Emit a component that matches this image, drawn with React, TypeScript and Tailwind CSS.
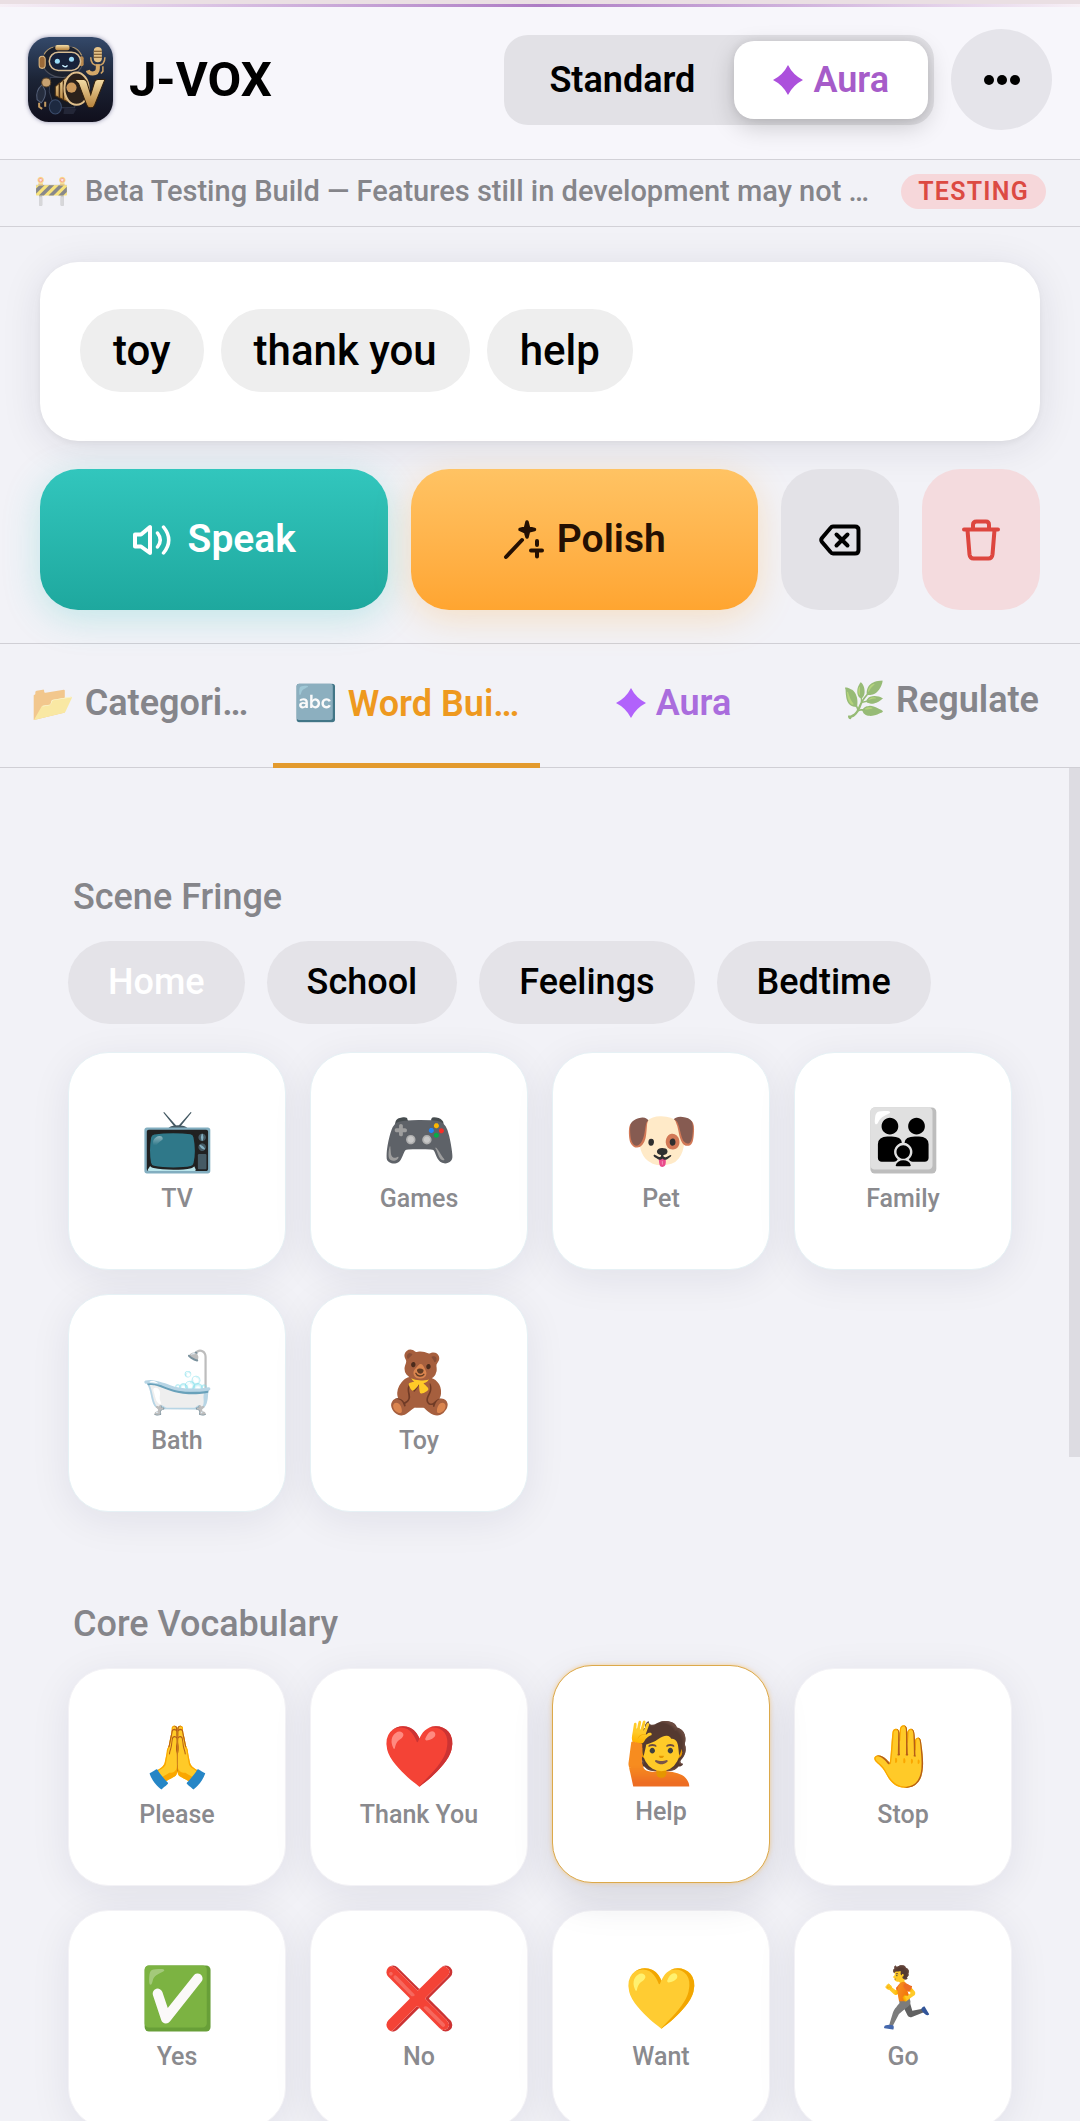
import * as React from "react";
import clsx from "clsx";

type Tile = {
  label: string;
  emoji: string;
};

const MESSAGE_WORDS = ["toy", "thank you", "help"];

const SCENES = ["Home", "School", "Feelings", "Bedtime"];

const SCENE_TILES: Tile[] = [
  { label: "TV", emoji: "📺" },
  { label: "Games", emoji: "🎮" },
  { label: "Pet", emoji: "🐶" },
  { label: "Family", emoji: "👪" },
  { label: "Bath", emoji: "🛁" },
  { label: "Toy", emoji: "🧸" }
];

const CORE_TILES: Tile[] = [
  { label: "Please", emoji: "🙏" },
  { label: "Thank You", emoji: "❤️" },
  { label: "Help", emoji: "🙋" },
  { label: "Stop", emoji: "🤚" },
  { label: "Yes", emoji: "✅" },
  { label: "No", emoji: "❌" },
  { label: "Want", emoji: "💛" },
  { label: "Go", emoji: "🏃" }
];

function Logo() {
  return (
    <svg
      viewBox="0 0 84 84"
      className="size-[85px] shrink-0 rounded-[21px] shadow-[0_0_4px_rgba(40,40,90,0.5)]"
      aria-hidden="true"
    >
      <defs>
        <linearGradient id="logoBg" x1="0" y1="0" x2="0" y2="1">
          <stop offset="0" stopColor="#34496a" />
          <stop offset="0.5" stopColor="#1c2436" />
          <stop offset="1" stopColor="#100f1c" />
        </linearGradient>
        <linearGradient id="gold" x1="0" y1="0" x2="0" y2="1">
          <stop offset="0" stopColor="#f3dca6" />
          <stop offset="1" stopColor="#b5803a" />
        </linearGradient>
      </defs>
      <rect width="84" height="84" fill="url(#logoBg)" />
      {/* body and arms */}
      <path d="M22 40h24l4 10-4 20H26l-5-16z" fill="#161922" stroke="#353d50" />
      <path d="M14 47q-7 6-5 15l4 3q5-5 4-12z" fill="#262d3e" stroke="#56617a" />
      <circle cx="18" cy="45" r="4.500" fill="#c8a272" stroke="#5d4426" />
      <path d="M11 65v4l3 2M17 64v5" fill="none" stroke="#c39a63" strokeWidth="2" />
      <ellipse cx="27" cy="69" rx="6" ry="7" fill="#1d2940" stroke="#3b4c6b" />
      <path d="M36 70l12 1-3 5H35z" fill="#232637" />
      {/* head */}
      <ellipse cx="34" cy="24" rx="20" ry="16" fill="#1c212d" stroke="#4c505c" />
      <rect x="27" y="8" width="14" height="5" rx="2" fill="url(#gold)" />
      <path d="M16 17c2-4 5-6 9-7M44 10c4 1 7 4 9 8" fill="none" stroke="#b99b6b" strokeWidth="1" />
      <rect x="11" y="19" width="6" height="12" rx="3" fill="#9b6a39" stroke="#e0bb83" />
      <rect x="51" y="19" width="4" height="10" rx="2" fill="#b98a50" />
      <rect x="21" y="15" width="31" height="18" rx="9" fill="#17223a" stroke="#d8bd93" strokeWidth="1.500" />
      <circle cx="29" cy="24" r="2.500" fill="#9bdcf7" />
      <circle cx="43" cy="22" r="2.500" fill="#9bdcf7" />
      <path d="M34 28q3 3 5 0" fill="none" stroke="#c9efff" strokeWidth="1.500" />
      {/* microphone forming a J */}
      <rect x="65" y="10" width="8" height="15" rx="4" fill="#e4c288" />
      <path d="M65 14h8M65 17h8M65 20h8" stroke="#6c4a20" strokeWidth="1" />
      <path d="M62 20q0 8 7 8t7-8" fill="none" stroke="#cfa366" strokeWidth="1.500" />
      <path d="M69 27v4q0 5-5 5-4 0-5-3" fill="none" stroke="#d4a868" strokeWidth="4" />
      <path d="M74 29v5l-2 2" fill="none" stroke="#cfa366" strokeWidth="1.500" />
      {/* megaphone */}
      <path d="M27 49l12-10v25l-12-6z" fill="url(#gold)" stroke="#4c3114" />
      <path d="M31 46v14M35 43v19" stroke="#4c3114" strokeWidth="1.500" />
      <ellipse cx="48" cy="51" rx="12" ry="16" fill="#2b211b" stroke="#dfbf8b" strokeWidth="2" />
      <circle cx="43" cy="50" r="5" fill="#cd9a5d" />
      <path d="M46 42h9q2 0 3 2l4 13 4-13q1-2 3-2h7L66 67q-1 3-4 3t-4-3L50 46z" fill="url(#gold)" stroke="#33210e" strokeWidth="1" />
    </svg>
  );
}

function SparkIcon() {
  return (
    <svg viewBox="0 0 30 30" className="size-[30px] shrink-0" fill="currentColor" aria-hidden="true">
      <path d="M15 0Q20 10 30 15Q20 20 15 30Q10 20 0 15Q10 10 15 0Z" />
    </svg>
  );
}

function DotsIcon() {
  return (
    <svg viewBox="0 0 38 12" className="h-3 w-[38px]" fill="currentColor" aria-hidden="true">
      <circle cx="6" cy="6" r="5" />
      <circle cx="19" cy="6" r="5" />
      <circle cx="32" cy="6" r="5" />
    </svg>
  );
}

function SpeakerIcon() {
  return (
    <svg
      viewBox="0 0 40 34"
      className="h-[34px] w-10"
      fill="none"
      stroke="currentColor"
      strokeWidth="4"
      strokeLinecap="round"
      strokeLinejoin="round"
      aria-hidden="true"
    >
      <path d="M3 11.500h6L18 4v26L9 23.500H3z" />
      <path d="M25.500 10q5.500 7 0 14M31.500 4q10.500 13 0 26" strokeWidth="3.500" />
    </svg>
  );
}

function WandIcon() {
  return (
    <svg viewBox="0 0 42 42" className="size-[42px]" stroke="currentColor" strokeLinecap="round" strokeLinejoin="round" aria-hidden="true">
      <path d="M3 38L19 21" fill="none" strokeWidth="4" />
      <path d="M24 3l1.500 6 6 1.500-6 1.500L24 18l-1.500-5-5.500-2.500 5.500-1.500z" fill="currentColor" strokeWidth="3.500" />
      <path d="M34 22v4M28 31.500h11M34 31.500v6" fill="none" strokeWidth="4" />
    </svg>
  );
}

function BackspaceIcon() {
  return (
    <svg
      viewBox="0 0 42 32"
      className="h-8 w-[42px]"
      fill="none"
      stroke="currentColor"
      strokeWidth="4"
      strokeLinecap="round"
      strokeLinejoin="round"
      aria-hidden="true"
    >
      <path d="M14 2.500H36Q39.500 2.500 39.500 6V26Q39.500 29.500 36 29.500H14Q12.500 29.500 11.500 28L3 18Q1.500 16 3 14L11.500 4Q12.500 2.500 14 2.500Z" />
      <path d="M17.500 10.500l11 11M28.500 10.500l-11 11" />
    </svg>
  );
}

function TrashIcon() {
  return (
    <svg
      viewBox="0 0 38 42"
      className="h-[42px] w-[38px]"
      fill="none"
      stroke="currentColor"
      strokeWidth="4"
      strokeLinecap="round"
      strokeLinejoin="round"
      aria-hidden="true"
    >
      <path d="M2 10.500h34" />
      <path d="M11 10V6Q11 2.500 14.500 2.500H24Q27 2.500 27 6V10" />
      <path d="M5.500 11L7.500 35.500Q8 39.500 11.500 39.500H26.500Q30 39.500 30.500 35.500L32.500 11" />
    </svg>
  );
}

function TileGrid({
  tiles,
  tone,
  highlighted
}: {
  tiles: Tile[];
  tone: "scene" | "core";
  highlighted?: string;
}) {
  return (
    <div className="grid grid-cols-4 gap-6">
      {tiles.map((tile) => (
        <button
          key={tile.label}
          type="button"
          className={clsx(
            "flex aspect-square flex-col items-center justify-center gap-2 rounded-[40px] border bg-white pb-0.5",
            tile.label === highlighted
              ? "z-10 -translate-y-[3px] border-[#dca94a] shadow-[0_0_4px_rgba(255,180,60,0.5),0_16px_40px_rgba(30,30,60,0.13)]"
              : "shadow-[0_8px_40px_rgba(30,30,60,0.08)]",
            tile.label !== highlighted && (tone === "scene" ? "border-[#e6f1f5]" : "border-[#f3f2f6]")
          )}
        >
          <span className="text-[60px] leading-[70px]">{tile.emoji}</span>
          <span className="text-[25px] leading-[30px] text-[#8a8a8e]">{tile.label}</span>
        </button>
      ))}
    </div>
  );
}

export default function App() {
  const [scene, setScene] = React.useState("Home");
  const tabClass = "flex flex-1 items-center justify-center gap-2.5 border-b-[5px]";

  return (
    <div className="relative flex h-screen flex-col overflow-hidden bg-[#f2f2f7] font-['Roboto',sans-serif] font-medium text-black">
      <div className="absolute inset-x-0 top-0 h-1 bg-[#eadfe3]" />
      <div className="absolute inset-x-0 top-1 h-[3px] bg-gradient-to-r from-[#f7f0f6] via-[#ad7cc4] to-[#f7f0f6]" />

      <header className="flex h-40 shrink-0 items-center border-b border-[#d2d1d7] bg-[#f7f6fb] px-7">
        <Logo />
        <h1 className="ml-4 text-[49px] font-bold leading-none">J-VOX</h1>
        <div className="ml-auto flex items-center gap-[17px]">
          <div className="flex rounded-3xl bg-[#e2e1e6] p-1.5 text-[36px] leading-none">
            <button type="button" className="px-[39px] font-semibold">
              Standard
            </button>
            <button
              type="button"
              className="flex h-[78px] items-center gap-2.5 rounded-[20px] bg-white px-[39px] font-semibold text-[#a65cc9] shadow-[0_8px_24px_rgba(0,0,0,0.18),0_0_8px_rgba(0,0,0,0.08)]"
            >
              <span className="text-[#ac50dc]">
                <SparkIcon />
              </span>
              Aura
            </button>
          </div>
          <button
            type="button"
            aria-label="More options"
            className="flex size-[101px] items-center justify-center rounded-full bg-[#e5e4ea]"
          >
            <DotsIcon />
          </button>
        </div>
      </header>

      <div className="flex h-[67px] shrink-0 items-center border-b border-[#d2d1d7] px-[34px] pb-1">
        <span className="text-[28px] leading-none opacity-50">🚧</span>
        <span className="ml-4 text-[29px] leading-9 text-[#85858a]">
          Beta Testing Build — Features still in development may not …
        </span>
        <span className="ml-auto rounded-full bg-[#f6d7da] px-[17px] text-[25px] font-semibold leading-[35px] tracking-wider text-[#dc4a42]">
          TESTING
        </span>
      </div>

      <section className="flex shrink-0 flex-col gap-7 border-b border-[#d0cfd5] px-10 pt-[35px] pb-[33px]">
        <div className="flex h-[179px] items-center gap-[17px] rounded-[38px] bg-white px-10 pb-0.5 shadow-[0_6px_40px_rgba(30,30,60,0.1),0_2px_6px_rgba(0,0,0,0.05)]">
          {MESSAGE_WORDS.map((word) => (
            <button key={word} type="button" className="rounded-[41px] bg-[#eeeeee] px-[33px] text-[42px] leading-[83px]">
              {word}
            </button>
          ))}
        </div>
        <div className="flex h-[141px] gap-[23px] text-[39px] font-semibold leading-none">
          <button
            type="button"
            className="flex flex-1 items-center justify-center gap-4 rounded-[38px] bg-gradient-to-b from-[#32c6bd] to-[#1ea89e] text-white shadow-[0_8px_36px_rgba(50,198,189,0.26)]"
          >
            <SpeakerIcon />
            Speak
          </button>
          <button
            type="button"
            className="flex flex-1 items-center justify-center gap-3 rounded-[38px] bg-gradient-to-b from-[#ffc363] to-[#ffa530] text-[#241003] shadow-[0_8px_36px_rgba(255,165,48,0.26)]"
          >
            <WandIcon />
            Polish
          </button>
          <button
            type="button"
            aria-label="Delete last word"
            className="flex w-[118px] items-center justify-center rounded-[38px] bg-[#e3e2e7]"
          >
            <BackspaceIcon />
          </button>
          <button
            type="button"
            aria-label="Clear message"
            className="flex w-[118px] items-center justify-center rounded-[38px] bg-[#f4dbde] text-[#dd463f]"
          >
            <TrashIcon />
          </button>
        </div>
      </section>

      <nav className="flex h-[124px] shrink-0 border-b border-[#d0cfd5] px-1.5 text-[36px] font-semibold leading-none text-[#85858a]">
        <button type="button" className={clsx(tabClass, "border-transparent")}>
          <span className="text-[35px] opacity-60">📂</span>
          Categori…
        </button>
        <button type="button" className={clsx(tabClass, "-mb-px border-[#e39a2d] text-[#ee991f]")}>
          <span className="text-[35px]">🔤</span>
          Word Bui…
        </button>
        <button type="button" className={clsx(tabClass, "border-transparent text-[#aa6ddd]")}>
          <span className="text-[#b162fb]">
            <SparkIcon />
          </span>
          Aura
        </button>
        <button type="button" className={clsx(tabClass, "border-transparent pb-1.5")}>
          <span className="text-[35px] opacity-60">🌿</span>
          Regulate
        </button>
      </nav>

      <main className="relative min-h-0 flex-1 overflow-hidden px-[68px] pt-[107px]">
        <div className="absolute top-0 right-0 h-[689px] w-[11px] bg-[#dddce2]" />
        <h2 className="mb-[22px] px-[5px] text-[36px] font-medium leading-[44px] text-[#85858a]">Scene Fringe</h2>
        <div className="mb-7 flex gap-[22px]">
          {SCENES.map((name) => (
            <button
              key={name}
              type="button"
              onClick={() => setScene(name)}
              className={clsx(
                "rounded-full bg-[#e4e3e8] px-10 text-[36px] leading-[83px]",
                name === scene && "text-white"
              )}
            >
              {name}
            </button>
          ))}
        </div>
        <TileGrid tiles={SCENE_TILES} tone="scene" />
        <h2 className="mt-[90px] mb-[22px] px-[5px] text-[36px] font-medium leading-[44px] text-[#85858a]">
          Core Vocabulary
        </h2>
        <TileGrid tiles={CORE_TILES} tone="core" highlighted="Help" />
      </main>
    </div>
  );
}
